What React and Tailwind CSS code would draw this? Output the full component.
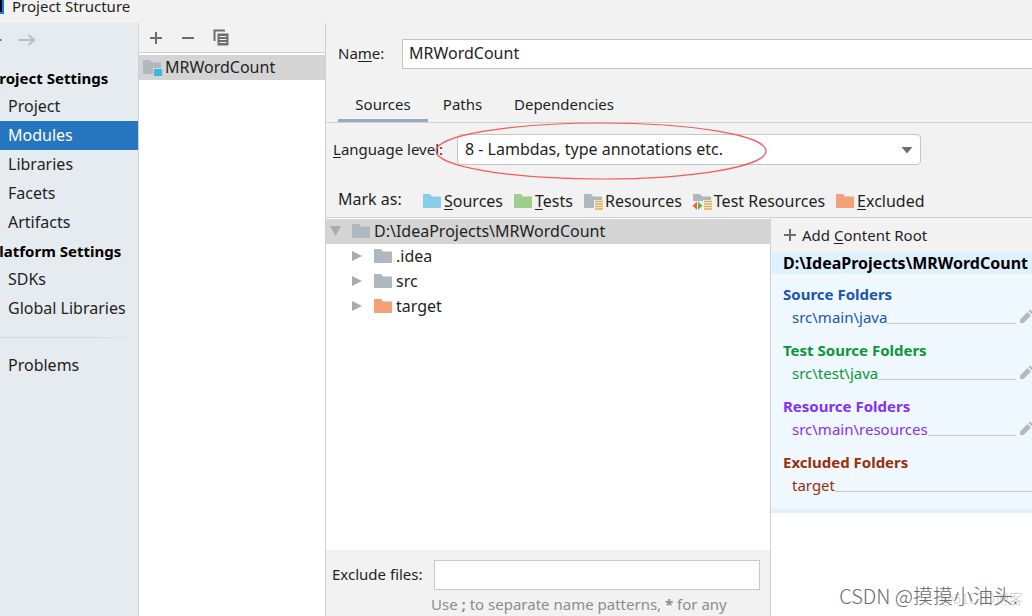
const FOLDER_COLORS = {
  gray: "#adb8bf",
  blue: "#87cfe8",
  green: "#9dcf8a",
  orange: "#f4a078",
};

function Folder({ color = "gray", badge }) {
  return (
    <svg width="20" height="18" viewBox="0 0 20 18" className="shrink-0" aria-hidden="true">
      <path d="M1 2h7l2 2.5h9V16H1z" fill={FOLDER_COLORS[color]} />
      {badge === "module" && <path d="M11 10h9v8h-9z" fill="#d4d4d4" />}
      {badge === "module" && <path d="M12 11h8v7h-8z" fill="#42b4e0" />}
      {(badge === "lines" || badge === "test") && (
        <g>
          <path d="M11 8h9v10h-9z" fill="#f2f2f2" />
          <path d="M12 9.5h8M12 12h8M12 14.5h8M12 17h8" stroke="#e0b04f" strokeWidth="1.4" />
        </g>
      )}
      {badge === "test" && (
        <g>
          <path d="M0 9h11v9H0z" fill="#f2f2f2" />
          <path d="M5 9.5v8.5L0.5 13.8z" fill="#f0652f" />
          <path d="M6 9.5v8.5l4.5-4.2z" fill="#5bb947" />
        </g>
      )}
    </svg>
  );
}

function Plus() {
  return (
    <svg width="14" height="14" viewBox="0 0 14 14" className="shrink-0" aria-hidden="true">
      <path d="M7 1v12M1 7h12" stroke="#6e6e6e" strokeWidth="2" />
    </svg>
  );
}

function NavHeading({ children }) {
  return <h2 className="-ml-2.5 flex h-7 items-center font-bold whitespace-nowrap text-black">{children}</h2>;
}

function NavItem({ children, active }) {
  return (
    <a
      href="#"
      aria-current={active ? "page" : undefined}
      className={
        active
          ? "flex h-[29px] items-center bg-[#2675bf] pb-0.5 pl-2 text-base leading-5 whitespace-nowrap text-white"
          : "flex h-[29px] items-center pb-0.5 pl-2 text-base leading-5 whitespace-nowrap"
      }
    >
      {children}
    </a>
  );
}

function TreeRow({ label, color, root }) {
  return (
    <li
      className={
        root
          ? "flex h-[25px] items-center bg-[#d4d4d4] pb-0.5 pl-1 text-base leading-5"
          : "flex h-[25px] items-center pb-0.5 pl-[26px] text-base leading-5"
      }
    >
      <svg width="11" height="12" viewBox="0 0 11 12" className="shrink-0" aria-hidden="true">
        <path d={root ? "M0 1h11L5.5 11z" : "M0 1l10 5L0 11z"} fill="#ababab" />
      </svg>
      <span className="ml-[10px] flex items-center gap-[3px]">
        <Folder color={color} />
        {label}
      </span>
    </li>
  );
}

function MarkButton({ color, badge, children }) {
  return (
    <button type="button" className="flex items-center gap-0.5 text-base leading-5">
      <Folder color={color} badge={badge} />
      <span>{children}</span>
    </button>
  );
}

function FolderGroup({ title, path, tone, editable }) {
  return (
    <section className={tone}>
      <h3 className="h-6 font-bold leading-6">{title}</h3>
      <div className="flex h-8 items-start pl-[9px] leading-[22px]">
        <span>{path}</span>
        <span className="mt-[17px] h-px grow bg-[#c9c9c9]" />
        {editable && (
          <button type="button" aria-label={"Edit " + path} className="mt-[3px] -mr-[2px] ml-[3px] shrink-0">
            <svg width="15" height="15" viewBox="0 0 15 15" aria-hidden="true">
              <path d="M1 14v-3.500l7.500-7.500 3.500 3.500L4.500 14zM9.500 2l1.500-1.500 3.500 3.500L13 5.500z" fill="#b4b8bc" />
            </svg>
          </button>
        )}
      </div>
    </section>
  );
}

const U = ({ children }) => <span className="underline underline-offset-2">{children}</span>;

export default function App() {
  return (
    <div className="flex min-h-screen flex-col overflow-hidden bg-[#f2f2f2] font-['Noto_Sans','Noto_Sans_CJK_SC',sans-serif] text-[15px] leading-5 text-[#1f1f1f]">
      <header className="flex h-[23px] items-start">
        <svg width="4" height="14" viewBox="0 0 4 14" aria-hidden="true">
          <path d="M0 0h4v14H0z" fill="#087cfa" />
          <path d="M0 0h2v12H0z" fill="#000" />
        </svg>
        <h1 className="-mt-1 ml-2">Project Structure</h1>
      </header>

      <div className="flex grow">
        <nav className="w-[139px] shrink-0 overflow-hidden border-r border-[#d0d3d6] bg-[#e6ebef]">
          <div className="flex h-[41px] items-start pt-[11px]">
            <svg width="36" height="12" viewBox="0 0 36 12" fill="none" aria-hidden="true">
              <path d="M0 6h1.500" stroke="#6e6e6e" strokeWidth="2" />
              <path d="M18 6h16M28.500 1l5.500 5-5.500 5" stroke="#bcbfc1" strokeWidth="2" />
            </svg>
          </div>
          <NavHeading>Project Settings</NavHeading>
          <NavItem>Project</NavItem>
          <NavItem active>Modules</NavItem>
          <NavItem>Libraries</NavItem>
          <NavItem>Facets</NavItem>
          <NavItem>Artifacts</NavItem>
          <NavHeading>Platform Settings</NavHeading>
          <NavItem>SDKs</NavItem>
          <NavItem>Global Libraries</NavItem>
          <hr className="mt-3.5 mr-2 mb-[13px] h-px border-0 bg-linear-to-r from-[#d2d6d9] from-70% to-[#e6ebef]" />
          <NavItem>Problems</NavItem>
        </nav>

        <section className="flex w-[187px] shrink-0 flex-col border-r border-[#cfcfcf] bg-white">
          <div className="flex h-[30px] items-center gap-[18px] border-b border-[#cfcfcf] bg-[#f2f2f2] pl-[10px]">
            <button type="button" aria-label="Add">
              <Plus />
            </button>
            <button type="button" aria-label="Remove">
              <svg width="14" height="14" viewBox="0 0 14 14" aria-hidden="true">
                <path d="M1 7h12" stroke="#6e6e6e" strokeWidth="2" />
              </svg>
            </button>
            <button type="button" aria-label="Copy">
              <svg width="17" height="17" viewBox="0 0 17 17" fill="none" aria-hidden="true">
                <path d="M1.500 12V1.500H12" stroke="#6e6e6e" strokeWidth="2" />
                <path d="M4.500 4.500h11v12h-11z" fill="#6e6e6e" />
                <path d="M6.500 7.500h7M6.500 10.500h7M6.500 13.500h7" stroke="#f2f2f2" strokeWidth="1.200" />
              </svg>
            </button>
          </div>
          <div className="mt-0.5 flex h-[25px] items-center gap-[3px] bg-[#d4d4d4] pb-0.5 pl-[3px] text-base leading-5">
            <Folder badge="module" />
            MRWordCount
          </div>
        </section>

        <main className="flex min-w-0 grow flex-col">
          <div className="mt-4 flex h-[30px] items-center pl-3">
            <label htmlFor="name" className="w-16 pb-0.5">
              Na<U>m</U>e:
            </label>
            <input
              id="name"
              defaultValue="MRWordCount"
              className="h-[30px] min-w-0 grow border border-r-0 border-[#c4c4c4] bg-white px-1.5 pb-0.5 text-base leading-5"
            />
          </div>

          <div role="tablist" className="mt-[19px] flex h-[35px] border-b border-[#d1d1d1] pl-3">
            <button type="button" role="tab" aria-selected="true" className="w-[90px] border-b-[3px] border-[#9ba9bd]">
              Sources
            </button>
            <button type="button" role="tab" aria-selected="false" className="w-[69px] pb-[3px]">
              Paths
            </button>
            <button type="button" role="tab" aria-selected="false" className="w-[134px] pb-[3px]">
              Dependencies
            </button>
          </div>

          <div className="relative mt-[11px] flex h-[31px] items-center pl-[7px]">
            <label htmlFor="level" className="w-[124px] pb-0.5 whitespace-nowrap">
              <U>L</U>anguage level:
            </label>
            <div className="relative w-[464px]">
              <select
                id="level"
                className="block h-[31px] w-full appearance-none rounded-sm border border-[#c4c4c4] bg-white px-[7px] pb-0.5 text-base leading-5"
              >
                <option>8 - Lambdas, type annotations etc.</option>
              </select>
              <svg width="12" height="7" viewBox="0 0 12 7" className="pointer-events-none absolute top-[13px] right-2" aria-hidden="true">
                <path d="M0.500 0h11L6 6.500z" fill="#6e6e6e" />
              </svg>
            </div>
            <svg
              width="332"
              height="58"
              viewBox="0 0 332 58"
              className="pointer-events-none absolute -top-3 left-[109px]"
              fill="none"
              aria-hidden="true"
            >
              <ellipse cx="166" cy="29" rx="165" ry="28" stroke="#f45b5b" strokeWidth="1.200" />
            </svg>
          </div>

          <div className="mt-[23px] flex h-[30px] border-b border-[#d1d1d1] pl-3 whitespace-nowrap">
            <span className="mt-px w-[84px] text-base leading-5">Mark as:</span>
            <div className="mt-[3px] flex items-start gap-2.5">
              <MarkButton color="blue"><U>S</U>ources</MarkButton>
              <MarkButton color="green"><U>T</U>ests</MarkButton>
              <MarkButton badge="lines">Resources</MarkButton>
              <MarkButton badge="test">Test Resources</MarkButton>
              <MarkButton color="orange"><U>E</U>xcluded</MarkButton>
            </div>
          </div>

          <div className="flex grow">
            <div className="flex w-[445px] shrink-0 flex-col border-r border-[#d1d1d1] bg-white">
              <ul className="grow pt-px">
                <TreeRow root label="D:\IdeaProjects\MRWordCount" />
                <TreeRow label=".idea" />
                <TreeRow label="src" />
                <TreeRow label="target" color="orange" />
              </ul>
              <div className="h-[66px] bg-[#f2f2f2] pt-[10px] pl-1.5">
                <div className="flex items-center">
                  <label htmlFor="exclude" className="w-[102px] pb-0.5 whitespace-nowrap">Exclude files:</label>
                  <input id="exclude" className="h-[30px] w-[326px] border border-[#c9c9c9] bg-white px-2" />
                </div>
                <p className="mt-1 pl-[99px] whitespace-nowrap text-[#8c8c8c]">
                  Use <b>;</b> to separate name patterns, <b>*</b> for any
                </p>
              </div>
            </div>

            <div className="flex min-w-0 grow flex-col bg-white">
              <button type="button" className="flex h-[34px] items-center gap-[5px] bg-[#f2f2f2] pl-3 whitespace-nowrap">
                <Plus />
                <span>Add <U>C</U>ontent Root</span>
              </button>
              <h2 className="h-[22px] overflow-hidden bg-[#dff1ff] pl-3 text-base leading-[22px] font-bold whitespace-nowrap text-black">
                D:\IdeaProjects\MRWordCount
              </h2>
              <div className="border-b-4 border-[#dff1ff] bg-[#eff8ff] pt-2 pb-[3px] pl-3">
                <FolderGroup title="Source Folders" path="src\main\java" tone="text-[#1b55ad]" editable />
                <FolderGroup title="Test Source Folders" path="src\test\java" tone="text-[#0c9634]" editable />
                <FolderGroup title="Resource Folders" path="src\main\resources" tone="text-[#8430f5]" editable />
                <FolderGroup title="Excluded Folders" path="target" tone="text-[#9c2f0b]" />
              </div>
              <footer className="relative mt-auto flex h-[34px] justify-end pr-1 font-['Noto_Sans_CJK_SC',sans-serif] font-light whitespace-nowrap">
                <span className="absolute top-1.5 right-[9px] text-[14px] text-[#c9c9c9]">@51CTO博客</span>
                <span className="relative pt-1 pr-2.5 text-[20px] text-[#6b6b6b]">CSDN @摸摸小油头.</span>
              </footer>
            </div>
          </div>
        </main>
      </div>
    </div>
  );
}
